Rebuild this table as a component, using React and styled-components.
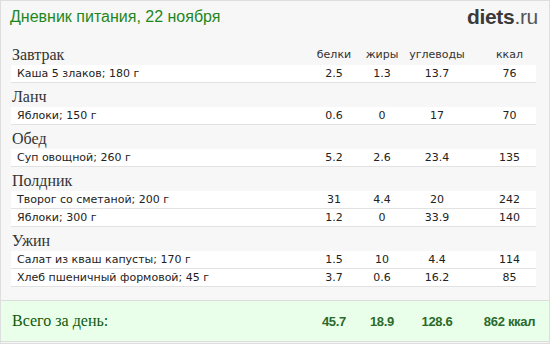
import React from "react";
import styled, { createGlobalStyle } from "styled-components";

const GlobalStyle = createGlobalStyle`
  body {
    margin: 0;
    background: #ffffff;
  }
`;

const MEALS = [
  {
    title: "Завтрак",
    items: [{ name: "Каша 5 злаков; 180 г", p: "2.5", f: "1.3", c: "13.7", k: "76" }],
  },
  {
    title: "Ланч",
    items: [{ name: "Яблоки; 150 г", p: "0.6", f: "0", c: "17", k: "70" }],
  },
  {
    title: "Обед",
    items: [{ name: "Суп овощной; 260 г", p: "5.2", f: "2.6", c: "23.4", k: "135" }],
  },
  {
    title: "Полдник",
    items: [
      { name: "Творог со сметаной; 200 г", p: "31", f: "4.4", c: "20", k: "242" },
      { name: "Яблоки; 300 г", p: "1.2", f: "0", c: "33.9", k: "140" },
    ],
  },
  {
    title: "Ужин",
    items: [
      { name: "Салат из кваш капусты; 170 г", p: "1.5", f: "10", c: "4.4", k: "114" },
      { name: "Хлеб пшеничный формовой; 45 г", p: "3.7", f: "0.6", c: "16.2", k: "85" },
    ],
  },
];

const App = () => {
  return (
    <>
      <GlobalStyle />
      <Card>
        <Header>
          <Title>Дневник питания, 22 ноября</Title>
          <Logo>
            <b>diets</b>.ru
          </Logo>
        </Header>

        {MEALS.map((meal, i) => (
          <Section key={meal.title}>
            <HeadingRow>
              <MealName>{meal.title}</MealName>
              {i === 0 && (
                <>
                  <ColLabel>белки</ColLabel>
                  <ColLabel>жиры</ColLabel>
                  <ColLabel>углеводы</ColLabel>
                  <ColLabel $last>ккал</ColLabel>
                </>
              )}
            </HeadingRow>
            {meal.items.map((item) => (
              <FoodRow key={item.name}>
                <FoodName>{item.name}</FoodName>
                <Num>{item.p}</Num>
                <Num>{item.f}</Num>
                <Num>{item.c}</Num>
                <Num $last>{item.k}</Num>
              </FoodRow>
            ))}
          </Section>
        ))}

        <Total>
          <TotalLabel>Всего за день:</TotalLabel>
          <TotalNum>45.7</TotalNum>
          <TotalNum>18.9</TotalNum>
          <TotalNum>128.6</TotalNum>
          <TotalNum $last>862 ккал</TotalNum>
        </Total>
      </Card>
    </>
  );
};

const COLUMNS = "1fr 50px 46px 64px 67px";

const Card = styled.div`
  box-sizing: border-box;
  width: 550px;
  height: 344px;
  background: #f7f7f7;
  border: 1px solid #dedede;
  display: flex;
  flex-direction: column;
`;

const Header = styled.div`
  height: 40px;
  display: flex;
  justify-content: space-between;
  align-items: flex-start;
  padding: 0 11px 0 9px;
`;

const Title = styled.h1`
  margin: 7px 0 0;
  font-family: "Liberation Sans", Arial, sans-serif;
  font-weight: normal;
  font-size: 16px;
  color: #1e871e;
`;

const Logo = styled.div`
  margin-top: 4px;
  font-family: "Liberation Sans", Arial, sans-serif;
  font-size: 21px;
  color: #555;
  letter-spacing: -0.3px;

  b {
    color: #3a3a3a;
  }
`;

const Section = styled.div`
  display: flex;
  flex-direction: column;
`;

const HeadingRow = styled.div`
  display: grid;
  grid-template-columns: ${COLUMNS};
  align-items: end;
  height: 24px;
  padding: 0 13px 0 10px;
`;

const MealName = styled.div`
  font-family: "Liberation Serif", "Times New Roman", serif;
  font-size: 16px;
  color: #333;
  line-height: 20px;
  padding-left: 1px;
`;

const ColLabel = styled.div`
  font-family: "DejaVu Sans", Verdana, sans-serif;
  font-size: 11px;
  color: #333;
  text-align: center;
  line-height: 20px;
  padding-left: ${(p) => (p.$last ? "14px" : "0")};
`;

const FoodRow = styled.div`
  display: grid;
  grid-template-columns: ${COLUMNS};
  align-items: center;
  height: 18px;
  box-sizing: border-box;
  margin: 0 13px 0 10px;
  background: #ffffff;
  border-bottom: 1px solid #e2e2e2;
  font-family: "DejaVu Sans", Verdana, sans-serif;
  font-size: 11px;
  color: #222;
`;

const FoodName = styled.div`
  padding-left: 6px;
  white-space: nowrap;
`;

const Num = styled.div`
  text-align: center;
  padding-left: ${(p) => (p.$last ? "14px" : "0")};
`;

const Total = styled.div`
  margin-top: auto;
  margin-bottom: 1px;
  display: grid;
  grid-template-columns: ${COLUMNS};
  align-items: center;
  height: 42px;
  box-sizing: border-box;
  padding: 0 13px 0 10px;
  background: #eaffea;
  border-top: 1px solid #dcdcdc;
  border-bottom: 1px solid #dcdcdc;
`;

const TotalLabel = styled.div`
  font-family: "Liberation Serif", "Times New Roman", serif;
  font-size: 16px;
  color: #0b5a0b;
  padding-left: 1px;
`;

const TotalNum = styled.div`
  font-family: "Liberation Sans", Arial, sans-serif;
  font-weight: bold;
  font-size: 13px;
  color: #2b6a2b;
  text-align: center;
  letter-spacing: -0.3px;
  padding-left: ${(p) => (p.$last ? "14px" : "0")};
`;

export default App;
